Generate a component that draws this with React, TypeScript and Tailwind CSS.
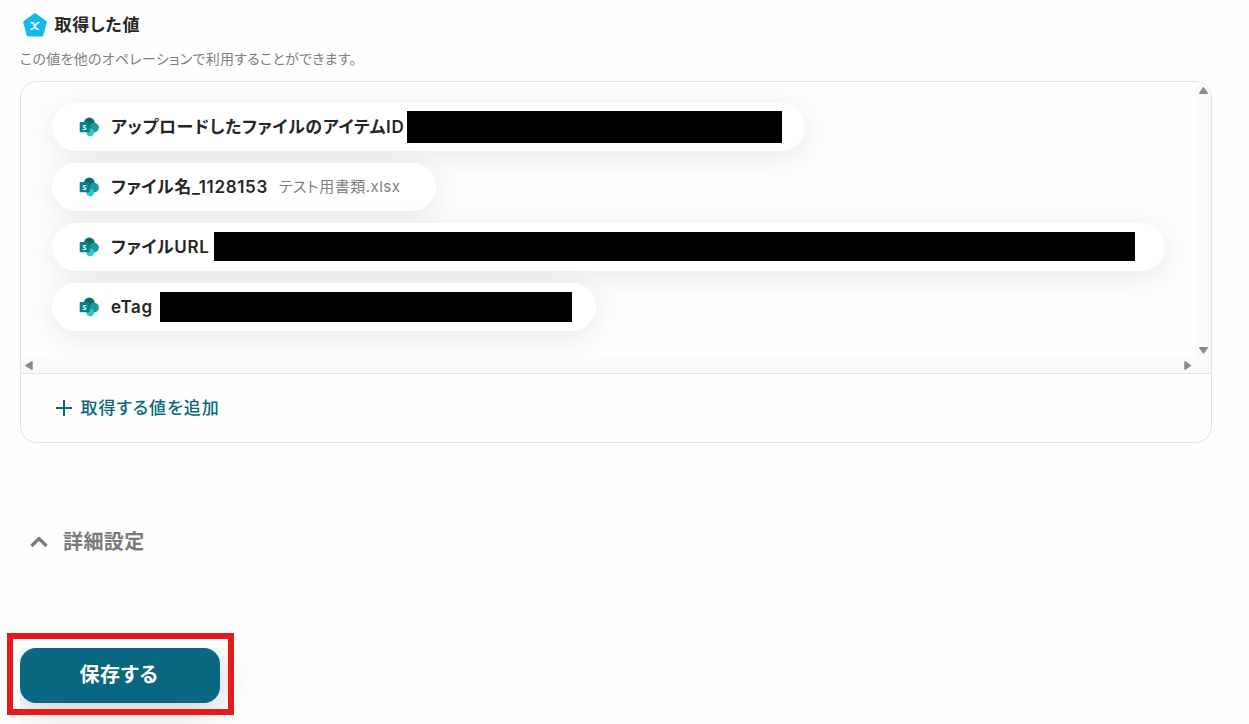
import type { ReactNode } from "react";

type Item = {
  label: string;
  value?: string;
  width: string;
  labelClass: string;
  mask?: string;
};

const items: Item[] = [
  {
    label: "アップロードしたファイルのアイテムID",
    width: "w-[753px]",
    labelClass: "w-[296px]",
    mask: "h-[32px] w-[375px] -mt-px",
  },
  {
    label: "ファイル名_1128153",
    value: "テスト用書類.xlsx",
    width: "w-[384px]",
    labelClass: "w-[168px]",
  },
  {
    label: "ファイルURL",
    width: "w-[1113px]",
    labelClass: "w-[103px]",
    mask: "h-[29px] w-[921px] -mt-px",
  },
  {
    label: "eTag",
    width: "w-[544px]",
    labelClass: "w-[49px]",
    mask: "h-[30px] w-[412px] -mt-px",
  },
];

function SharePointIcon() {
  return (
    <svg width="20" height="20" viewBox="0 0 20 20" className="shrink-0">
      <circle cx="10.300" cy="6" r="5.4" fill="#036c70" />
      <circle cx="15" cy="10.6" r="4.9" fill="#1a9ba1" />
      <circle cx="11.200" cy="15.6" r="3.8" fill="#37c6d0" />
      <path d="M5 5.4h6.4v10H7.1c-.2-3 0-5-2.1-10z" fill="#000" opacity=".18" />
      <rect x="0.700" y="4.900" width="9.700" height="10.400" rx="1" fill="#078489" />
      <text x="5.4" y="13" textAnchor="middle" fontSize="7.8" fontWeight="700" fill="#fff" fontFamily="Open Sans, sans-serif">
        S
      </text>
    </svg>
  );
}

function ValueIcon() {
  return (
    <svg width="26" height="26" viewBox="0 0 26 26" className="shrink-0">
      <path
        d="M13 2.700 23.300 10.200 19.800 23H6.200L2.700 10.200z"
        fill="#13b9ee"
        stroke="#13b9ee"
        strokeWidth="3"
        strokeLinejoin="round"
      />
      <path
        d="M9.200 10.600h.8c1 0 1.500.7 2 1.700l1.600 3.300c.5 1 1 1.700 2 1.700h.8M17 10.600c-1.100-.1-2 .6-2.800 1.700l-2.300 3.300c-.8 1.100-1.600 1.800-2.900 1.700"
        fill="none"
        stroke="#fff"
        strokeWidth="1.6"
        strokeLinecap="round"
      />
    </svg>
  );
}

function Arrow({ d }: { d: string }) {
  return (
    <svg width="15" height="15" viewBox="0 0 15 15" className="shrink-0">
      <path d={d} fill="#8b8b8b" stroke="#8b8b8b" strokeWidth="1.5" strokeLinejoin="round" />
    </svg>
  );
}

function Chip({ item }: { item: Item }) {
  return (
    <div
      className={`flex h-12 items-center rounded-full bg-white pl-[27px] shadow-[0_6px_30px_rgba(0,0,0,0.09)] ${item.width}`}
    >
      <SharePointIcon />
      <span className={`ml-3 shrink-0 pt-px whitespace-nowrap text-[17px] font-semibold tracking-[0.66px] text-[#262626] ${item.labelClass}`}>
        {item.label}
      </span>
      {item.mask && <span className={`shrink-0 bg-black ${item.mask}`} />}
      {item.value && <span className="whitespace-nowrap text-[15px] tracking-[0.5px] text-[#808080]">{item.value}</span>}
    </div>
  );
}

function Panel({ children }: { children: ReactNode }) {
  return (
    <div className="mt-3 flex h-[362px] w-[1192px] flex-col overflow-hidden rounded-2xl border border-[#e3e3e3]">
      {children}
    </div>
  );
}

export default function App() {
  return (
    <div className="h-[724px] w-[1249px] overflow-hidden bg-[#fefefe] pl-5 font-['Inter','Noto_Sans_CJK_JP',sans-serif] [font-feature-settings:'palt']">
      {/* 見出し */}
      <div className="flex h-[50px] items-center pl-0.5">
        <ValueIcon />
        <h2 className="ml-[6.500px] pt-px text-[17px] font-semibold tracking-[0.68px] text-[#262626]">取得した値</h2>
      </div>
      <p className="h-[19px] text-[14px] leading-[18px] tracking-[0.28px] text-[#808080]">
        この値を他のオペレーションで利用することができます。
      </p>

      {/* 取得した値の一覧 */}
      <Panel>
        <div className="flex h-[276px]">
          <div className="flex w-[1175px] flex-col gap-3 overflow-hidden pt-[21px] pl-[31px]">
            {items.map((item) => (
              <Chip key={item.label} item={item} />
            ))}
          </div>
          <div className="flex w-[15px] flex-col justify-between bg-[#fbfbfb]">
            <Arrow d="M7.500 5.800 11.200 11.200H3.800z" />
            <Arrow d="M7.500 9.800 11.200 4.700H3.800z" />
          </div>
        </div>
        <div className="flex h-[15px] justify-between bg-[#fbfbfb] pr-4">
          <Arrow d="M5 7.500 11 3.800v7.400z" />
          <Arrow d="M10.500 7.500 5 3.800v7.400z" />
        </div>
        <button className="flex flex-1 items-center border-t border-[#e3e3e3] pl-[35px] text-[17px] font-medium tracking-[1px] text-[#0a6780]">
          <svg width="16" height="16" viewBox="0 0 16 16" className="mr-[8.500px]">
            <path d="M8 0v16M0 8h16" stroke="currentColor" strokeWidth="2" />
          </svg>
          <span className="pt-px">取得する値を追加</span>
        </button>
      </Panel>

      {/* 詳細設定 */}
      <div className="mt-[83px] flex h-8 items-center pl-[9.500px] text-[#7a7a7a]">
        <svg width="18" height="12" viewBox="0 0 18 12" className="-mt-px">
          <path d="M1.500 10 9 2.500l7.500 7.500" fill="none" stroke="currentColor" strokeWidth="3.2" strokeLinejoin="round" />
        </svg>
        <span className="ml-[15.500px] text-[20px] font-semibold tracking-[0.4px]">詳細設定</span>
      </div>

      {/* 保存ボタン */}
      <div className="relative mt-[90px] h-[76px] w-[260px]">
        <div className="h-full overflow-hidden">
          <button className="h-[55px] w-[200px] rounded-2xl bg-[#0a6780] pr-0.5 pb-0.5 text-[20px] font-semibold tracking-[0.7px] text-white shadow-[0_6px_30px_rgba(10,30,60,0.22)]">
            保存する
          </button>
        </div>
        <div className="absolute -top-[15px] -left-[13px] h-[82px] w-[227px] border-6 border-[#e8191c]" />
      </div>
    </div>
  );
}
